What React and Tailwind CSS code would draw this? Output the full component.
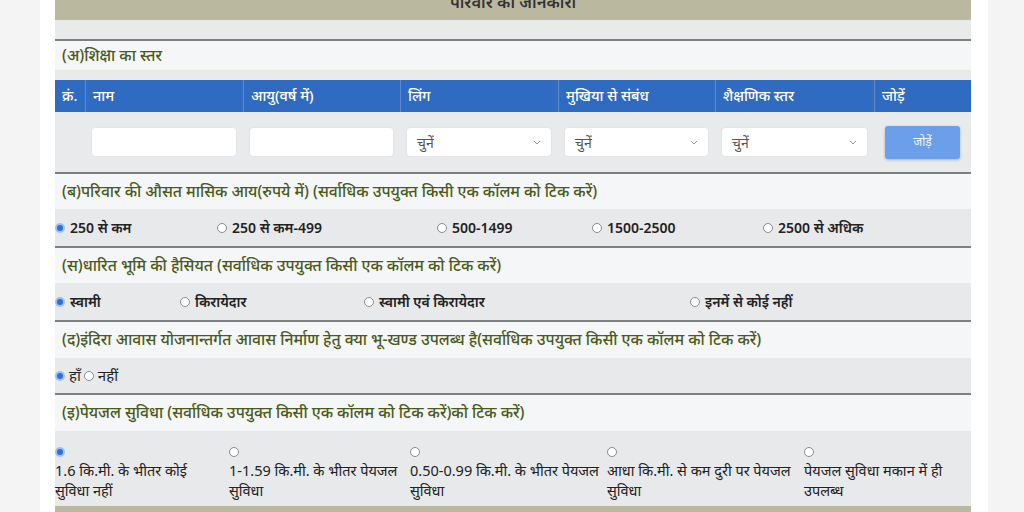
const font = { fontFamily: '"Noto Sans", "Noto Sans Devanagari", "Open Sans", sans-serif' };

const columns = [
  { label: 'क्रं.', w: 'w-[30px]' },
  { label: 'नाम', w: 'w-[158px]' },
  { label: 'आयु(वर्ष में)', w: 'w-[157px]' },
  { label: 'लिंग', w: 'w-[158px]' },
  { label: 'मुखिया से संबंध', w: 'w-[157px]' },
  { label: 'शैक्षणिक स्तर', w: 'w-[159px]' },
  { label: 'जोड़ें', w: 'flex-1' },
];

function Radio({ checked }) {
  return checked ? (
    <span className="inline-flex w-[10px] h-[10px] rounded-full bg-[#9ec1f5] items-center justify-center shrink-0">
      <span className="w-[6px] h-[6px] rounded-full bg-[#2f6fd6]" />
    </span>
  ) : (
    <span className="inline-block w-[10px] h-[10px] rounded-full bg-white border border-[#8a8a8a] shrink-0" />
  );
}

function SectionTitle({ children, h = 'h-[37px]' }) {
  return (
    <div className={`${h} flex items-center px-[7px] bg-[#f5f6f7] text-[15.7px] font-medium text-[#4a5a1c] border-t-2 border-[#7d7f80]`}>
      {children}
    </div>
  );
}

function Select() {
  return (
    <div className="h-[30px] bg-white rounded-[4px] border border-[#e2e4e6] flex items-center justify-between px-[10px] text-[14px] text-[#555]">
      <span>चुनें</span>
      <svg width="8" height="5" viewBox="0 0 8 5" fill="none" stroke="#999" strokeWidth="1">
        <path d="M1 1l3 3 3-3" />
      </svg>
    </div>
  );
}

function OptionRow({ items, cols, checkedIndex = 0, h = 'h-[37px]' }) {
  return (
    <div className={`${h} bg-[#e8e9ea] grid items-center text-[14px] text-[#222] font-semibold`} style={{ gridTemplateColumns: cols }}>
      {items.map((t, i) => (
        <label key={t} className="flex items-center gap-[5px]">
          <Radio checked={i === checkedIndex} />
          <span>{t}</span>
        </label>
      ))}
    </div>
  );
}

export default function App() {
  return (
    <div className="w-[1024px] h-[512px] overflow-hidden bg-[#f4f4f4] pl-[40px]" style={font}>
      <div className="w-[948px] h-full bg-white pl-[15px] pr-[17px] flex flex-col">
        <div className="-mt-[16px]">
          <div className="h-[36px] bg-[#bab9a0] flex items-center justify-center text-[16.5px] font-semibold text-[#333]">
            परिवार की जानकारी
          </div>
          <div className="h-[19px] bg-[#e9eaea]" />

          <SectionTitle h="h-[31px]">(अ)शिक्षा का स्तर</SectionTitle>
          <div className="h-[10px] bg-[#e9eaea]" />
          <div className="h-[32px] bg-[#2f6bc1] flex text-white text-[14.5px] font-medium">
            {columns.map((c, i) => (
              <div key={c.label} className={`${c.w} flex items-center px-[7px] ${i > 0 ? 'border-l border-[#5b8ad0]' : ''}`}>
                {c.label}
              </div>
            ))}
          </div>
          <div className="h-[60px] bg-[#e9eaeb] flex items-center">
            <div className="w-[30px]" />
            <div className="w-[158px] px-[6px]"><div className="h-[30px] bg-white rounded-[4px] border border-[#e2e4e6]" /></div>
            <div className="w-[157px] px-[6px]"><div className="h-[30px] bg-white rounded-[4px] border border-[#e2e4e6]" /></div>
            <div className="w-[158px] px-[6px]"><Select /></div>
            <div className="w-[157px] px-[6px]"><Select /></div>
            <div className="w-[159px] px-[6px]"><Select /></div>
            <div className="flex-1 pl-[11px] pr-[11px]">
              <div className="h-[33px] bg-[#6b9fea] rounded-[3px] shadow-[0_1px_3px_rgba(0,0,0,0.25)] flex items-center justify-center text-[#eef4fd] text-[12px]">
                जोड़ें
              </div>
            </div>
          </div>

          <SectionTitle>(ब)परिवार की औसत मासिक आय(रुपये में) (सर्वाधिक उपयुक्त किसी एक कॉलम को टिक करें)</SectionTitle>
          <OptionRow
            cols="162px 220px 155px 171px 1fr"
            items={['250 से कम', '250 से कम-499', '500-1499', '1500-2500', '2500 से अधिक']}
          />

          <SectionTitle>(स)धारित भूमि की हैसियत (सर्वाधिक उपयुक्त किसी एक कॉलम को टिक करें)</SectionTitle>
          <OptionRow
            cols="125px 184px 326px 1fr"
            items={['स्वामी', 'किरायेदार', 'स्वामी एवं किरायेदार', 'इनमें से कोई नहीं']}
          />

          <SectionTitle h="h-[38px]">(द)इंदिरा आवास योजनान्तर्गत आवास निर्माण हेतु क्या भू-खण्ड उपलब्ध है(सर्वाधिक उपयुक्त किसी एक कॉलम को टिक करें)</SectionTitle>
          <div className="h-[35px] bg-[#e8e9ea] flex items-center text-[15px] text-[#222]">
            <label className="flex items-center gap-[4px]"><Radio checked /><span>हाँ</span></label>
            <label className="flex items-center gap-[4px] ml-[3px]"><Radio /><span>नहीं</span></label>
          </div>

          <SectionTitle h="h-[38px]">(इ)पेयजल सुविधा (सर्वाधिक उपयुक्त किसी एक कॉलम को टिक करें)को टिक करें)</SectionTitle>
          <div className="h-[75px] bg-[#e8e9ea] grid pt-[15px] text-[14.5px] text-[#222] leading-[20px]" style={{ gridTemplateColumns: '174px 181px 197px 197px 1fr' }}>
            {[
              '1.6 कि.मी. के भीतर कोई सुविधा नहीं',
              '1-1.59 कि.मी. के भीतर पेयजल सुविधा',
              '0.50-0.99 कि.मी. के भीतर पेयजल सुविधा',
              'आधा कि.मी. से कम दुरी पर पेयजल सुविधा',
              'पेयजल सुविधा मकान में ही उपलब्ध',
            ].map((t, i) => (
              <div key={t} className="pr-[4px]">
                <div className="h-[12px] mb-[2px] flex items-center"><Radio checked={i === 0} /></div>
                <div className={i === 0 ? 'w-[150px]' : ''}>{t}</div>
              </div>
            ))}
          </div>
          <div className="h-[20px] bg-[#bab9a0]" />
        </div>
      </div>
    </div>
  );
}
